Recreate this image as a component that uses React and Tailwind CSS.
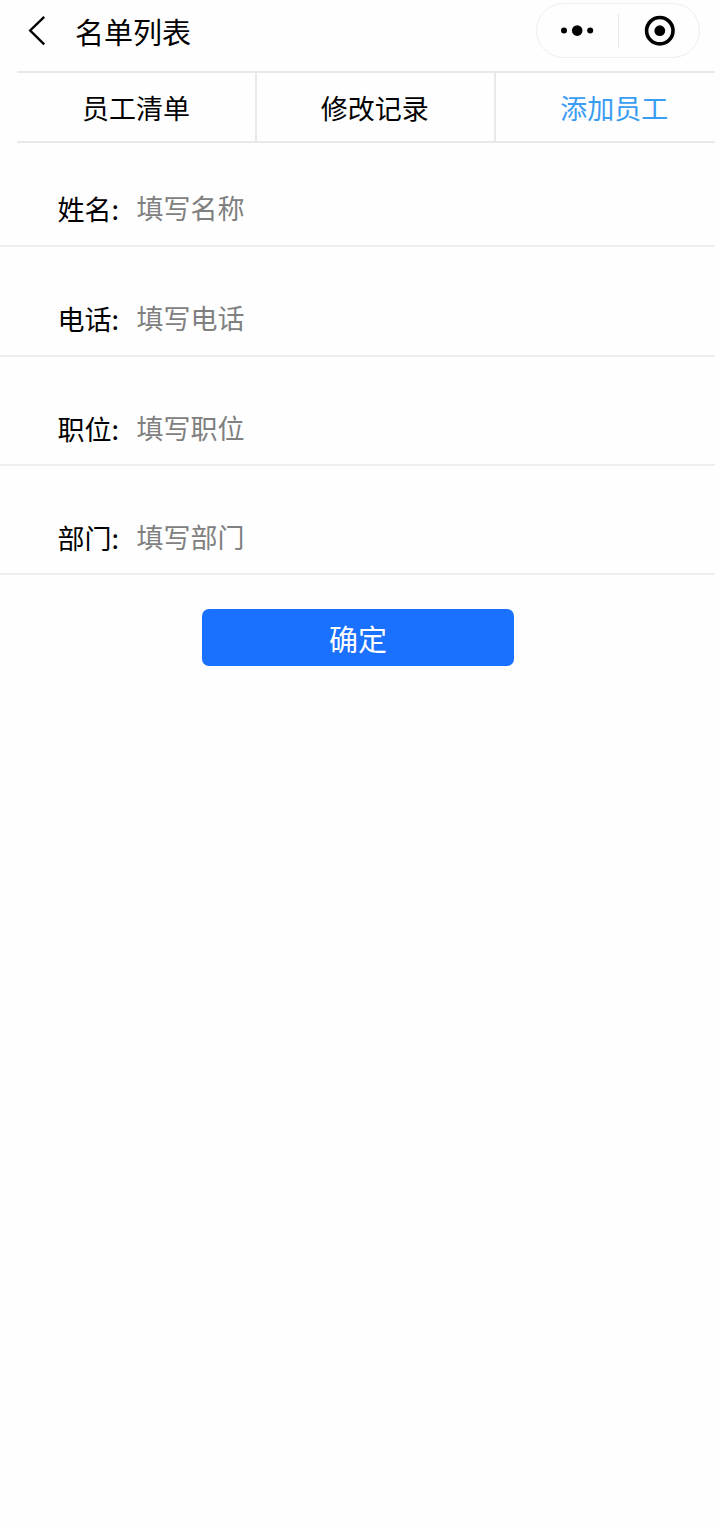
import { useState } from "react";

const tabs = [
  { id: "list", label: "员工清单" },
  { id: "log", label: "修改记录" },
  { id: "add", label: "添加员工" },
];

const fields = [
  { name: "name", label: "姓名:", placeholder: "填写名称" },
  { name: "phone", label: "电话:", placeholder: "填写电话" },
  { name: "position", label: "职位:", placeholder: "填写职位" },
  { name: "department", label: "部门:", placeholder: "填写部门" },
];

function Header() {
  return (
    <header className="flex h-[71px] items-start pl-[28px] pr-[15px] pt-[3px]">
      <button type="button" aria-label="返回" className="mt-[12px]">
        <svg width="18" height="32" viewBox="0 0 18 32" fill="none" stroke="#000" strokeWidth="2.4">
          <path d="M16.2 1.8 2.2 15.5 16.2 29.4" />
        </svg>
      </button>
      <h1 className="ml-[29px] mt-[7px] text-[29px] leading-[42px] text-black">名单列表</h1>
      <div className="ml-auto flex h-[55px] w-[164px] items-center rounded-full border border-[#eeeeee]">
        <button type="button" aria-label="更多" className="flex flex-1 justify-center">
          <svg width="34" height="12" viewBox="0 0 34 12" fill="#000">
            <circle cx="4" cy="5.6" r="3" />
            <circle cx="17.2" cy="5.6" r="5.3" />
            <circle cx="30.2" cy="5.6" r="3" />
          </svg>
        </button>
        <span className="h-[34px] w-px bg-[#e8e8e8]" />
        <button type="button" aria-label="关闭" className="flex flex-1 justify-center">
          <svg width="34" height="32" viewBox="0 0 34 32">
            <circle cx="17.8" cy="15.7" r="13.2" fill="none" stroke="#000" strokeWidth="3.6" />
            <circle cx="17.8" cy="15.7" r="5.4" fill="#000" />
          </svg>
        </button>
      </div>
    </header>
  );
}

function App() {
  const [active, setActive] = useState("add");
  const [form, setForm] = useState({ name: "", phone: "", position: "", department: "" });

  const handleChange = (e) => {
    setForm({
      ...form,
      [e.target.name]: e.target.value,
    });
  };

  return (
    <div className="min-h-[1525px] w-full bg-[#fefefe] font-['Noto_Sans_CJK_SC',sans-serif]">
      <div className="w-[715px]">
        <Header />
        <nav className="ml-[17px] flex h-[72px] border-y-2 border-[#e9e9e9]">
          {tabs.map((tab) => (
            <button
              key={tab.id}
              type="button"
              onClick={() => setActive(tab.id)}
              className={`w-[239px] shrink-0 border-r-2 border-[#e9e9e9] pr-[1.5px] pt-px text-[27px] leading-[40px] first:w-[240px] first:pr-0 last:w-[238px] last:border-r-0 ${
                active === tab.id ? "text-[#3a9cf2]" : "text-black"
              }`}
            >
              {tab.label}
            </button>
          ))}
        </nav>
        <form>
          {fields.map((field) => (
            <div
              key={field.name}
              className="flex h-[109.2px] items-start border-b-2 border-[#eeeeee] pl-[57.5px] pt-[51px] first:h-[104.4px] first:pt-[45.4px]"
            >
              <label htmlFor={field.name} className="mt-px w-[79px] text-[27px] leading-[40px] text-black">
                {field.label}
              </label>
              <input
                id={field.name}
                name={field.name}
                type="text"
                value={form[field.name]}
                onChange={handleChange}
                placeholder={field.placeholder}
                className="h-[40px] flex-1 text-[27px] leading-[40px] text-black outline-none placeholder:text-[#808080]"
              />
            </div>
          ))}
          <button
            type="button"
            className="ml-[202px] mt-[34px] block h-[57px] w-[312px] rounded-[7px] bg-[#1a70ff] pt-px text-[29px] leading-[56px] text-white"
          >
            确定
          </button>
        </form>
      </div>
    </div>
  );
}

export default App;
